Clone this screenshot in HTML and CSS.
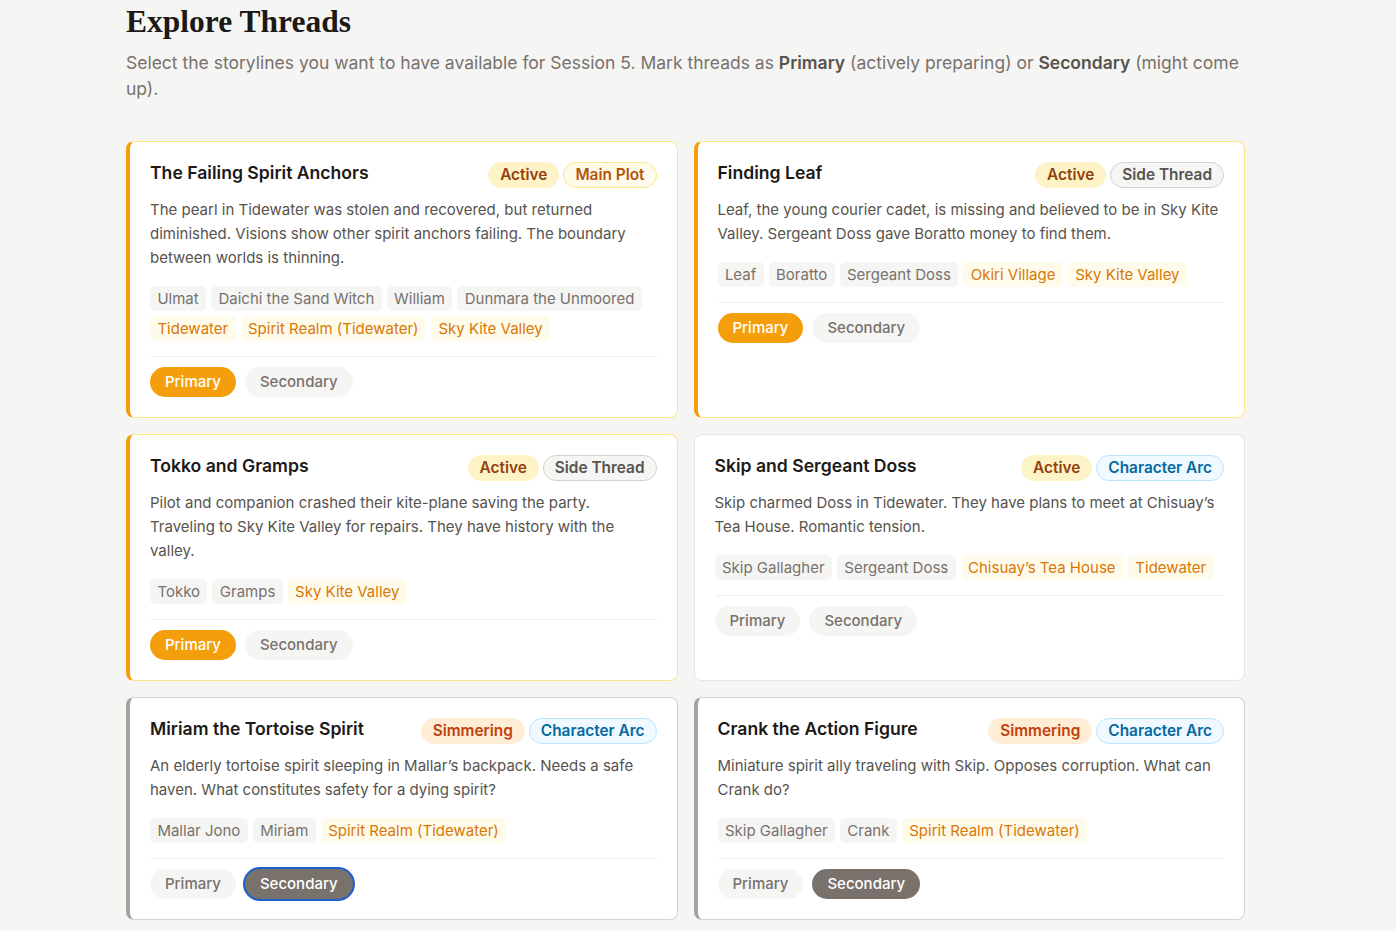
FILE: index.html
```html
<!DOCTYPE html>
<html lang="en">
<head>
<meta charset="utf-8">
<title>Explore Threads</title>
<link rel="stylesheet" href="styles.css">
</head>
<body>
<main class="page">
  <h1 class="page-title">Explore Threads</h1>
  <p class="page-intro">Select the storylines you want to have available for Session 5. Mark threads as <strong>Primary</strong> (actively preparing) or <strong>Secondary</strong> (might come up).</p>

  <div class="thread-grid">
    <section class="card card--primary">
      <div class="card-head">
        <h2 class="card-title">The Failing Spirit Anchors</h2>
        <div class="badges">
          <span class="badge badge--active">Active</span>
          <span class="badge badge--main">Main Plot</span>
        </div>
      </div>
      <p class="card-desc">The pearl in Tidewater was stolen and recovered, but returned diminished. Visions show other spirit anchors failing. The boundary between worlds is thinning.</p>
      <div class="tags">
        <span class="tag">Ulmat</span>
        <span class="tag">Daichi the Sand Witch</span>
        <span class="tag">William</span>
        <span class="tag">Dunmara the Unmoored</span>
        <span class="tag tag--place">Tidewater</span>
        <span class="tag tag--place">Spirit Realm (Tidewater)</span>
        <span class="tag tag--place">Sky Kite Valley</span>
      </div>
      <div class="actions">
        <button class="btn btn--primary-on">Primary</button>
        <button class="btn">Secondary</button>
      </div>
    </section>

    <section class="card card--primary">
      <div class="card-head">
        <h2 class="card-title">Finding Leaf</h2>
        <div class="badges">
          <span class="badge badge--active">Active</span>
          <span class="badge badge--side">Side Thread</span>
        </div>
      </div>
      <p class="card-desc">Leaf, the young courier cadet, is missing and believed to be in Sky Kite Valley. Sergeant Doss gave Boratto money to find them.</p>
      <div class="tags">
        <span class="tag">Leaf</span>
        <span class="tag">Boratto</span>
        <span class="tag">Sergeant Doss</span>
        <span class="tag tag--place">Okiri Village</span>
        <span class="tag tag--place">Sky Kite Valley</span>
      </div>
      <div class="actions">
        <button class="btn btn--primary-on">Primary</button>
        <button class="btn">Secondary</button>
      </div>
    </section>

    <section class="card card--primary">
      <div class="card-head">
        <h2 class="card-title">Tokko and Gramps</h2>
        <div class="badges">
          <span class="badge badge--active">Active</span>
          <span class="badge badge--side">Side Thread</span>
        </div>
      </div>
      <p class="card-desc">Pilot and companion crashed their kite-plane saving the party. Traveling to Sky Kite Valley for repairs. They have history with the valley.</p>
      <div class="tags">
        <span class="tag">Tokko</span>
        <span class="tag">Gramps</span>
        <span class="tag tag--place">Sky Kite Valley</span>
      </div>
      <div class="actions">
        <button class="btn btn--primary-on">Primary</button>
        <button class="btn">Secondary</button>
      </div>
    </section>

    <section class="card">
      <div class="card-head">
        <h2 class="card-title">Skip and Sergeant Doss</h2>
        <div class="badges">
          <span class="badge badge--active">Active</span>
          <span class="badge badge--arc">Character Arc</span>
        </div>
      </div>
      <p class="card-desc">Skip charmed Doss in Tidewater. They have plans to meet at Chisuay’s Tea House. Romantic tension.</p>
      <div class="tags">
        <span class="tag">Skip Gallagher</span>
        <span class="tag">Sergeant Doss</span>
        <span class="tag tag--place">Chisuay’s Tea House</span>
        <span class="tag tag--place">Tidewater</span>
      </div>
      <div class="actions">
        <button class="btn">Primary</button>
        <button class="btn">Secondary</button>
      </div>
    </section>

    <section class="card card--secondary">
      <div class="card-head">
        <h2 class="card-title">Miriam the Tortoise Spirit</h2>
        <div class="badges">
          <span class="badge badge--simmer">Simmering</span>
          <span class="badge badge--arc">Character Arc</span>
        </div>
      </div>
      <p class="card-desc">An elderly tortoise spirit sleeping in Mallar’s backpack. Needs a safe haven. What constitutes safety for a dying spirit?</p>
      <div class="tags">
        <span class="tag">Mallar Jono</span>
        <span class="tag">Miriam</span>
        <span class="tag tag--place">Spirit Realm (Tidewater)</span>
      </div>
      <div class="actions">
        <button class="btn">Primary</button>
        <button class="btn btn--secondary-on btn--focus">Secondary</button>
      </div>
    </section>

    <section class="card card--secondary">
      <div class="card-head">
        <h2 class="card-title">Crank the Action Figure</h2>
        <div class="badges">
          <span class="badge badge--simmer">Simmering</span>
          <span class="badge badge--arc">Character Arc</span>
        </div>
      </div>
      <p class="card-desc">Miniature spirit ally traveling with Skip. Opposes corruption. What can Crank do?</p>
      <div class="tags">
        <span class="tag">Skip Gallagher</span>
        <span class="tag">Crank</span>
        <span class="tag tag--place">Spirit Realm (Tidewater)</span>
      </div>
      <div class="actions">
        <button class="btn">Primary</button>
        <button class="btn btn--secondary-on">Secondary</button>
      </div>
    </section>
  </div>
</main>
</body>
</html>
```

FILE: styles.css
```css
* { box-sizing: border-box; }

body {
  margin: 0;
  background: #f5f5f4;
  font-family: Inter, "Noto Sans", "Liberation Sans", sans-serif;
  color: #1c1917;
}

.page {
  width: 1119px;
  margin-left: 126px;
  padding-top: 2px;
}

.page-title {
  margin: 0;
  font-family: "Liberation Serif", "DejaVu Serif", serif;
  font-weight: 700;
  font-size: 31.5px;
  line-height: 40px;
  color: #1c1917;
}

.page-intro {
  margin: 8px 0 39px;
  font-size: 17.5px;
  line-height: 26px;
  color: #78716c;
}

.page-intro strong {
  font-weight: 600;
  color: #57534e;
}

.thread-grid {
  display: grid;
  grid-template-columns: 1fr 1fr;
  gap: 16px;
}

.card {
  background: #ffffff;
  border: 1px solid #e7e5e4;
  border-radius: 8px;
  padding: 20px;
}

.card--primary {
  border-color: #fde68a;
  border-left: 4px solid #f59e0b;
}

.card--secondary {
  border-color: #d6d3d1;
  border-left: 4px solid #a8a29e;
}

.card-head {
  display: flex;
  justify-content: space-between;
  align-items: flex-start;
  gap: 12px;
  margin-bottom: 10px;
}

.card-title {
  margin: 0;
  font-size: 17.6px;
  font-weight: 600;
  line-height: 22px;
  color: #1c1917;
}

.badges {
  display: flex;
  gap: 4px;
  flex-shrink: 0;
}

.badge {
  font-size: 15.4px;
  font-weight: 600;
  line-height: 20px;
  padding: 2px 11px;
  border: 1px solid transparent;
  border-radius: 999px;
  white-space: nowrap;
}

.badge--active { background: #fef3c7; border-color: #fef3c7; color: #92400e; }
.badge--main { background: #fffbeb; border-color: #fde68a; color: #b45309; }
.badge--side { background: #f5f5f4; border-color: #d6d3d1; color: #57534e; }
.badge--arc { background: #f0f9ff; border-color: #bae6fd; color: #0369a1; }
.badge--simmer { background: #ffedd5; border-color: #ffedd5; color: #c2410c; }

.card-desc {
  margin: 0 0 16px;
  font-size: 15px;
  line-height: 24px;
  color: #57534e;
}

.tags {
  display: flex;
  flex-wrap: wrap;
  gap: 5px 5px;
  margin-bottom: 15px;
}

.tag {
  font-size: 15px;
  line-height: 21px;
  padding: 2px 7.4px;
  border-radius: 5px;
  background: #f5f5f4;
  color: #78716c;
  white-space: nowrap;
}

.tag--place {
  background: #fffbeb;
  color: #d97706;
}

.actions {
  display: flex;
  gap: 9px;
  border-top: 1px solid #f0efed;
  padding-top: 10px;
}

.btn {
  font-family: inherit;
  font-size: 15px;
  font-weight: 500;
  line-height: 22px;
  padding: 4px 15px;
  border: none;
  border-radius: 999px;
  background: #f5f5f4;
  color: #78716c;
}

.btn--primary-on { background: #f59e0b; color: #ffffff; }
.btn--secondary-on { background: #78716c; color: #ffffff; }
.btn--focus { box-shadow: 0 0 0 2px #1e5fd0; }
```
